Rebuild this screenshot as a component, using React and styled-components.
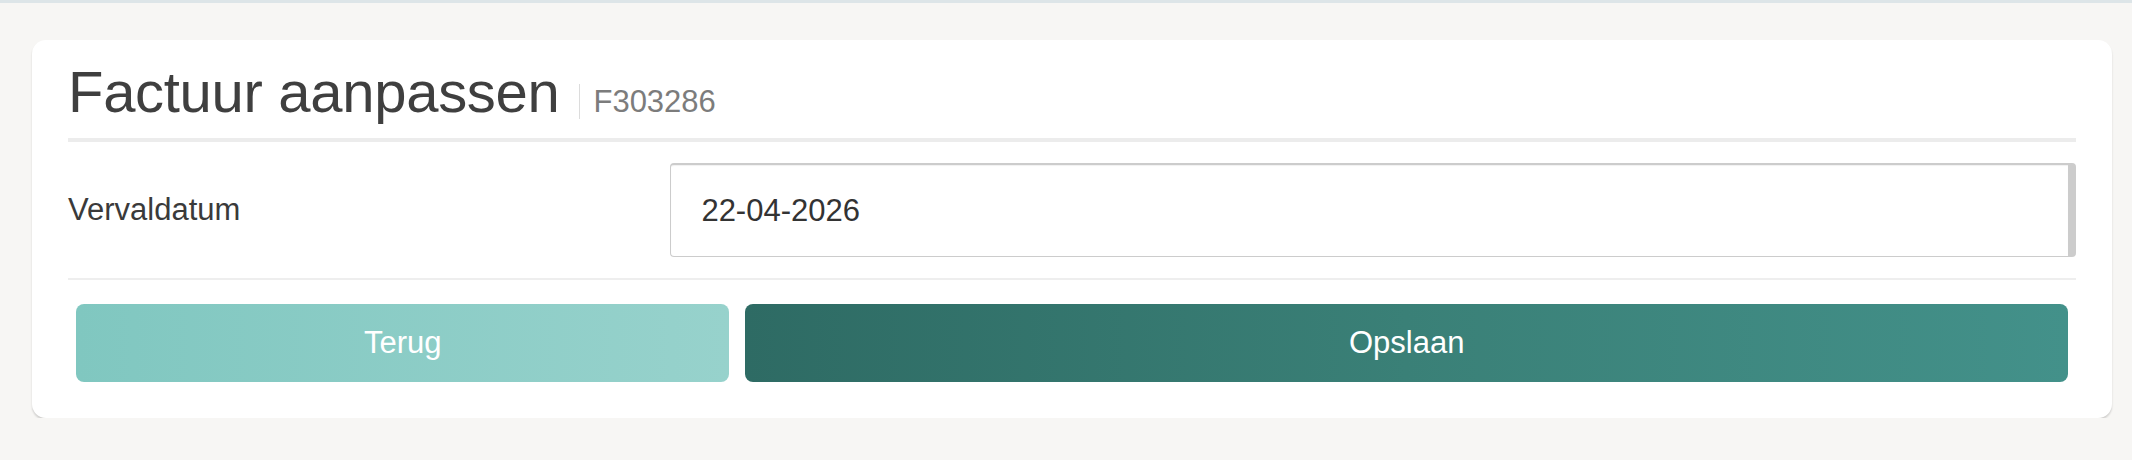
import React from "react";
import styled, { createGlobalStyle } from "styled-components";

const GlobalStyle = createGlobalStyle`
  html, body {
    margin: 0;
    padding: 0;
    background: #f7f6f4;
    font-family: "Liberation Sans", Arial, Helvetica, sans-serif;
  }
  * { box-sizing: border-box; }
`;

const TopStrip = styled.div`
  height: 3px;
  background: #dde5e8;
`;

const Page = styled.main`
  padding: 37px 20px 0 32px;
`;

const Card = styled.section`
  background: #ffffff;
  border-radius: 14px;
  box-shadow: 0 2px 2px rgba(0, 0, 0, 0.16);
  padding: 19px 36px 36px;
`;

const Header = styled.header`
  display: flex;
  align-items: baseline;
  padding-bottom: 13px;
  border-bottom: 4px solid #ececec;
`;

const Title = styled.h1`
  margin: 0;
  font-size: 58px;
  line-height: 66px;
  font-weight: 400;
  letter-spacing: -0.3px;
  color: #3f3f3f;
`;

const Subtitle = styled.span`
  display: inline-block;
  margin-left: 20px;
  padding-left: 13px;
  border-left: 1px solid #dcdcdc;
  font-size: 31px;
  line-height: 35px;
  color: #7c7c7c;
`;

const FormRow = styled.div`
  display: grid;
  grid-template-columns: 3fr 7fr;
  align-items: center;
  padding: 21px 0;
  border-bottom: 2px solid #eeeeee;
`;

const Label = styled.label`
  font-size: 31px;
  color: #3a3a3a;
`;

const DateInput = styled.input`
  display: block;
  width: 100%;
  height: 94px;
  padding: 0 30px;
  font-family: inherit;
  font-size: 31px;
  color: #333333;
  background: #ffffff;
  border: 1px solid #cccccc;
  border-top-width: 2px;
  border-right: 8px solid #cccccc;
  border-radius: 4px;
  box-shadow: inset 0 1px 1px rgba(0, 0, 0, 0.06);
  outline: none;
`;

const Actions = styled.div`
  display: flex;
  padding-top: 24px;
`;

const Col = styled.div`
  flex: 0 0 ${(p) => (p.$span / 12) * 100}%;
  padding: 0 8px;
`;

const Button = styled.button`
  display: block;
  width: 100%;
  height: 78px;
  border: none;
  border-radius: 8px;
  font-family: inherit;
  font-size: 31px;
  color: #ffffff;
  cursor: pointer;
  background: ${(p) =>
    p.$primary
      ? "linear-gradient(90deg, #2e6b64 0%, #3a8077 50%, #43918a 100%)"
      : "linear-gradient(90deg, #80c7c0 0%, #97d2cc 100%)"};
`;

export default function App() {
  return (
    <>
      <GlobalStyle />
      <TopStrip />
      <Page>
        <Card>
          <Header>
            <Title>Factuur aanpassen</Title>
            <Subtitle>F303286</Subtitle>
          </Header>
          <FormRow>
            <Label htmlFor="vervaldatum">Vervaldatum</Label>
            <DateInput id="vervaldatum" type="text" defaultValue="22-04-2026" />
          </FormRow>
          <Actions>
            <Col $span={4}>
              <Button type="button">Terug</Button>
            </Col>
            <Col $span={8}>
              <Button type="button" $primary>Opslaan</Button>
            </Col>
          </Actions>
        </Card>
      </Page>
    </>
  );
}
